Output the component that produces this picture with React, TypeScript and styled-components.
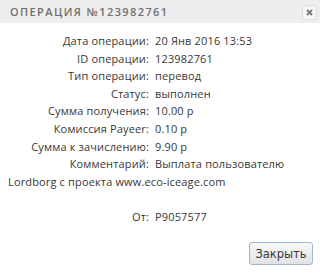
import React from 'react';
import styled, {createGlobalStyle} from "styled-components";

const GlobalStyle = createGlobalStyle`
    body {
        margin: 0;
        background: #ffffff;
    }
`

const Dialog = styled.div`
    width: 320px;
    height: 273px;
    display: flex;
    flex-direction: column;
    background: #ffffff;
    font-family: "Open Sans", "DejaVu Sans", sans-serif;
`

const Header = styled.div`
    height: 23px;
    display: flex;
    align-items: center;
    justify-content: space-between;
    padding: 0 3px 0 10px;
    background: #eeeeee;
`

const Title = styled.div`
    font-size: 11px;
    font-weight: 600;
    letter-spacing: 1.4px;
    color: #707070;
`

const CloseButton = styled.div`
    width: 13px;
    height: 13px;
    margin-top: 1px;
    display: flex;
    align-items: center;
    justify-content: center;
    border: 1px solid #dddddd;
    border-radius: 3px;
    background: #f6f6f6;
`

const Body = styled.div`
    flex: 1;
    padding: 9px 8px 0 8px;
    font-size: 11px;
    line-height: 17.6px;
    letter-spacing: 0.15px;
    color: #383838;
`

const Line = styled.div<{$gap?: number}>`
    display: flex;
    margin-bottom: ${p => p.$gap ?? 0}px;
`

const Label = styled.span`
    width: 141px;
    flex-shrink: 0;
    padding-right: 6px;
    text-align: right;
`

const Footer = styled.div`
    display: flex;
    justify-content: flex-end;
    padding: 0 7px 8px 0;
`

const Button = styled.button`
    width: 64px;
    height: 23px;
    padding: 0;
    border: 1px solid #9fb6d8;
    border-radius: 3px;
    background: linear-gradient(#f8f8f8, #e2e2e2);
    font-family: "DejaVu Sans", Verdana, sans-serif;
    font-size: 11.5px;
    color: #3a3a3a;
`

const rows: [string, string][] = [
    ["Дата операции:", "20 Янв 2016 13:53"],
    ["ID операции:", "123982761"],
    ["Тип операции:", "перевод"],
    ["Статус:", "выполнен"],
    ["Сумма получения:", "10.00 р"],
    ["Комиссия Payeer:", "0.10 р"],
    ["Сумма к зачислению:", "9.90 р"],
    ["Комментарий:", "Выплата пользователю"],
]

export default function App() {
    return (
        <>
            <GlobalStyle/>
            <Dialog>
                <Header>
                    <Title>ОПЕРАЦИЯ №123982761</Title>
                    <CloseButton>
                        <svg width="7" height="7" viewBox="0 0 7 7">
                            <path d="M1 1L6 6M6 1L1 6" stroke="#777" strokeWidth="1.8"/>
                        </svg>
                    </CloseButton>
                </Header>
                <Body>
                    {rows.map(([label, value]) => (
                        <Line key={label}>
                            <Label>{label}</Label>
                            <span>{value}</span>
                        </Line>
                    ))}
                    {/* comment wraps back to the left edge */}
                    <Line $gap={17.6}>Lordborg с проекта www.eco-iceage.com</Line>
                    <Line>
                        <Label>От:</Label>
                        <span>P9057577</span>
                    </Line>
                </Body>
                <Footer>
                    <Button>Закрыть</Button>
                </Footer>
            </Dialog>
        </>
    )
}
